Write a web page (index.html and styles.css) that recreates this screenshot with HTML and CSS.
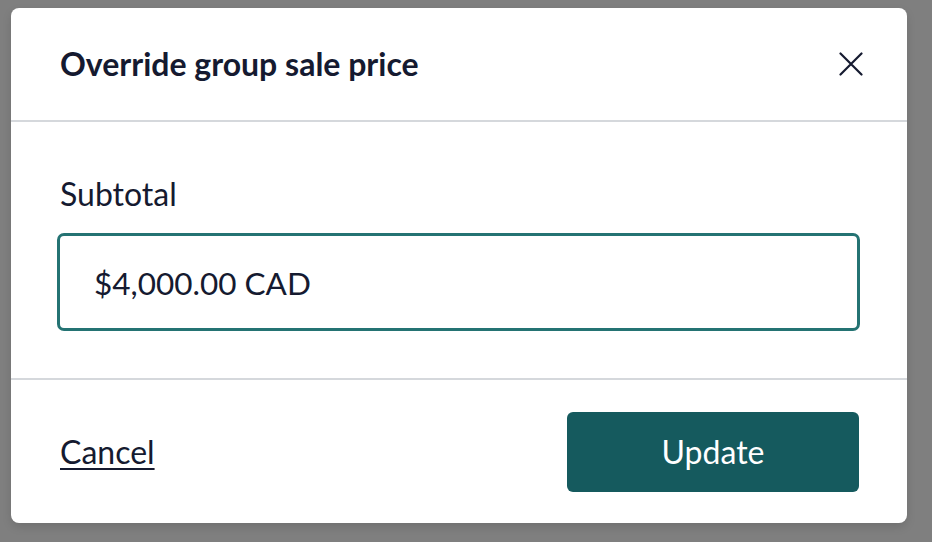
FILE: index.html
```html
<!DOCTYPE html>
<html lang="en">
<head>
<meta charset="utf-8">
<title>Override group sale price</title>
<link rel="stylesheet" href="styles.css">
</head>
<body>
<div class="modal">
  <div class="modal-header">
    <h1 class="modal-title">Override group sale price</h1>
    <button class="close-btn" aria-label="Close">
      <svg width="24" height="24" viewBox="0 0 24 24" fill="none" stroke="#151a30" stroke-width="2.2" stroke-linecap="round"><path d="M1.5 1.5L22.5 22.5M22.5 1.5L1.5 22.5"/></svg>
    </button>
  </div>
  <div class="modal-body">
    <label class="field-label">Subtotal</label>
    <div class="field-input">$4,000.00 CAD</div>
  </div>
  <div class="modal-footer">
    <a class="cancel-link" href="#">Cancel</a>
    <button class="update-btn">Update</button>
  </div>
</div>
</body>
</html>
```
FILE: styles.css
```css
html, body {
  margin: 0;
  padding: 0;
  height: 100%;
}
body {
  background: #7f7f7f;
  font-family: Lato, "Open Sans", sans-serif;
  color: #151a30;
  overflow: hidden;
}
.modal {
  box-sizing: border-box;
  margin: 8px 0 0 11px;
  width: 896px;
  height: 515px;
  background: #ffffff;
  border-radius: 8px;
  box-shadow: 0 4px 10px rgba(0,0,0,0.12);
  display: flex;
  flex-direction: column;
}
.modal-header {
  box-sizing: border-box;
  height: 114px;
  padding: 0 44px 0 49px;
  display: flex;
  align-items: center;
  justify-content: space-between;
  border-bottom: 2px solid #d5d8dc;
}
.modal-title {
  margin: 0;
  font-size: 32px;
  font-weight: 700;
  line-height: 32px;
}
.close-btn {
  background: none;
  border: 0;
  padding: 0;
  width: 24px;
  height: 24px;
  display: flex;
  cursor: pointer;
}
.modal-body {
  box-sizing: border-box;
  height: 258px;
  padding: 56px 47px 0 46px;
  display: flex;
  flex-direction: column;
  border-bottom: 2px solid #d5d8dc;
}
.field-label {
  font-size: 32px;
  line-height: 32px;
  margin-left: 3px;
  margin-bottom: 23px;
}
.field-input {
  box-sizing: border-box;
  height: 98px;
  border: 3px solid #247373;
  border-radius: 7px;
  padding: 2px 34px 0;
  display: flex;
  align-items: center;
  font-size: 31.5px;
}
.modal-footer {
  flex: 1;
  padding: 0 48px 0 49px;
  display: flex;
  align-items: center;
  justify-content: space-between;
}
.cancel-link {
  font-size: 32px;
  line-height: 32px;
  color: #151a30;
  text-decoration: underline;
  text-decoration-thickness: 2px;
  text-underline-offset: 4px;
}
.update-btn {
  width: 292px;
  height: 80px;
  border: 0;
  border-radius: 6px;
  background: #155a5e;
  color: #ffffff;
  font-family: Lato, "Open Sans", sans-serif;
  font-size: 32px;
  cursor: pointer;
}
```
